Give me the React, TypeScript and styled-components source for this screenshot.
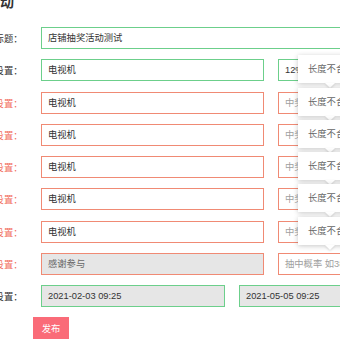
import React from 'react';
import styled, { createGlobalStyle } from 'styled-components';

const GREEN = '#6ccf8b';
const RED = '#f08a74';
const FONT = '"Liberation Sans", "Noto Sans CJK SC", sans-serif';

const GlobalStyle = createGlobalStyle`
  html, body {
    margin: 0;
    padding: 0;
    background: #ffffff;
    overflow: hidden;
  }
  body {
    font-family: ${FONT};
    font-size: 9.3px;
    color: #333333;
  }
`;

type Tone = 'ok' | 'error';

const prizes = [
  { name: '电视机', rate: '12%', labelTone: 'ok' as Tone, tone: 'ok' as Tone },
  { name: '电视机', rate: '', labelTone: 'error' as Tone, tone: 'error' as Tone },
  { name: '电视机', rate: '', labelTone: 'error' as Tone, tone: 'error' as Tone },
  { name: '电视机', rate: '', labelTone: 'error' as Tone, tone: 'error' as Tone },
  { name: '电视机', rate: '', labelTone: 'error' as Tone, tone: 'error' as Tone },
  { name: '电视机', rate: '', labelTone: 'error' as Tone, tone: 'error' as Tone },
];

export default function App() {
  return (
    <>
      <GlobalStyle />
      <App.Wrapper>
        <App.Heading>抽奖活动</App.Heading>

        <App.Row>
          <App.Label $tone="ok">活动标题：</App.Label>
          <App.Input $tone="ok" $width="460px">店铺抽奖活动测试</App.Input>
        </App.Row>

        {prizes.map((p, i) => (
          <App.Row key={i}>
            <App.Label $tone={p.labelTone}>奖品设置：</App.Label>
            <App.Input $tone={p.tone} $width="223px">{p.name}</App.Input>
            <App.Anchor>
              <App.Input $tone={p.tone} $width="223px" $placeholder={!p.rate}>
                {p.rate || '中奖概率 如38%'}
              </App.Input>
              <App.Tooltip>
                长度不合法，请重新输入
                <App.Arrow />
              </App.Tooltip>
            </App.Anchor>
          </App.Row>
        ))}

        <App.Row>
          <App.Label $tone="error">奖品设置：</App.Label>
          <App.Input $tone="error" $width="223px" $disabled>感谢参与</App.Input>
          <App.Anchor>
            <App.Input $tone="error" $width="223px" $placeholder>抽中概率 如38%</App.Input>
          </App.Anchor>
        </App.Row>

        <App.Row>
          <App.Label $tone="ok">时间设置：</App.Label>
          <App.Input $tone="ok" $width="184px" $disabled $dark>2021-02-03 09:25</App.Input>
          <App.Anchor>
            <App.Input $tone="ok" $width="184px" $disabled $dark>2021-05-05 09:25</App.Input>
          </App.Anchor>
        </App.Row>

        <App.Row>
          <App.Spacer />
          <App.Button>发布</App.Button>
        </App.Row>
      </App.Wrapper>
    </>
  );
}

App.Wrapper = styled.div`
  display: flex;
  flex-direction: column;
  margin-left: -60px;
  margin-top: -6px;
  width: 700px;
`;

App.Heading = styled.div`
  height: 17px;
  line-height: 17px;
  padding-left: 18px;
  font-size: 14px;
  font-weight: bold;
  color: #333333;
  margin-bottom: 16px;
`;

App.Row = styled.div`
  display: flex;
  align-items: center;
  height: 22px;
  margin-bottom: 10.25px;
`;

App.Label = styled.div<{ $tone: Tone }>`
  width: 82.5px;
  flex: none;
  text-align: right;
  margin-right: 18.5px;
  font-size: 9.3px;
  color: ${p => (p.$tone === 'error' ? '#f2705f' : '#333333')};
`;

App.Spacer = styled.div`
  width: 93px;
  flex: none;
`;

App.Anchor = styled.div`
  position: relative;
  margin-left: 14px;
  display: flex;
`;

App.Input = styled.div<{
  $tone: Tone;
  $width: string;
  $disabled?: boolean;
  $placeholder?: boolean;
  $dark?: boolean;
}>`
  box-sizing: border-box;
  width: ${p => p.$width};
  height: 22px;
  line-height: 20px;
  padding: 0 6px;
  flex: none;
  border: 1px solid ${p => (p.$tone === 'error' ? RED : GREEN)};
  background: ${p => (p.$disabled ? '#e6e6e6' : '#ffffff')};
  color: ${p => (p.$placeholder ? '#a0a0a0' : p.$disabled && !p.$dark ? '#666666' : '#333333')};
  font-size: 9.3px;
  white-space: nowrap;
  overflow: hidden;
`;

App.Tooltip = styled.div`
  position: absolute;
  left: 20px;
  top: -4px;
  height: 28px;
  line-height: 28px;
  padding: 0 10px;
  background: #ffffff;
  color: #666666;
  font-size: 9.3px;
  white-space: nowrap;
  box-shadow: 0 1px 5px rgba(0, 0, 0, 0.22);
  z-index: 2;
`;

App.Arrow = styled.span`
  position: absolute;
  left: 27px;
  bottom: -5px;
  width: 0;
  height: 0;
  border-left: 5px solid transparent;
  border-right: 5px solid transparent;
  border-top: 5px solid #ffffff;
  filter: drop-shadow(0 1px 1px rgba(0, 0, 0, 0.15));
`;

App.Button = styled.button`
  width: 36px;
  height: 22px;
  padding: 0;
  border: none;
  background: #fa6b78;
  color: #ffffff;
  font-family: ${FONT};
  font-size: 9.3px;
  cursor: pointer;
`;
